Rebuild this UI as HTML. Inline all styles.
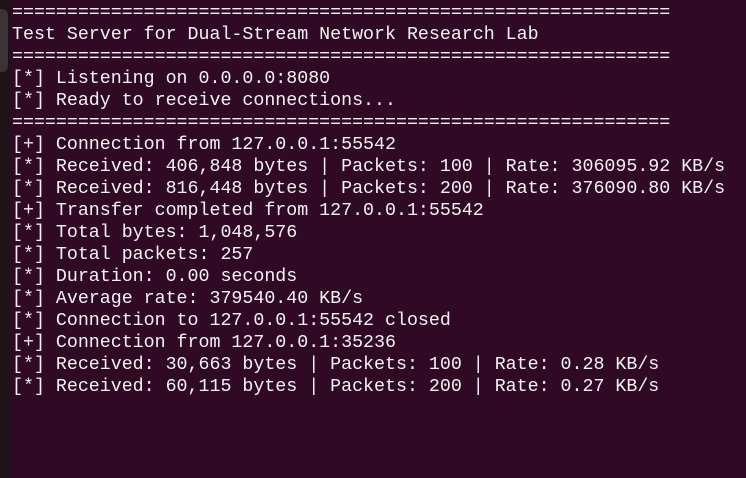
<!DOCTYPE html>
<html><head><style>
html,body{margin:0;padding:0;width:746px;height:478px;overflow:hidden;background:#300a24;}
.strip{position:absolute;left:0;top:0;width:11px;height:478px;background:#201219;}
.knob{position:absolute;left:0;top:9px;width:8px;height:63px;background:#3b3337;border-radius:0 6px 6px 0;}
pre{position:absolute;left:12px;top:2px;margin:0;font-family:"Liberation Mono",monospace;font-size:18.3px;line-height:22px;color:#f2f2f2;}
</style></head><body>
<div class="strip"></div><div class="knob"></div>
<pre>============================================================
Test Server for Dual-Stream Network Research Lab
============================================================
[*] Listening on 0.0.0.0:8080
[*] Ready to receive connections...
============================================================
[+] Connection from 127.0.0.1:55542
[*] Received: 406,848 bytes | Packets: 100 | Rate: 306095.92 KB/s
[*] Received: 816,448 bytes | Packets: 200 | Rate: 376090.80 KB/s
[+] Transfer completed from 127.0.0.1:55542
[*] Total bytes: 1,048,576
[*] Total packets: 257
[*] Duration: 0.00 seconds
[*] Average rate: 379540.40 KB/s
[*] Connection to 127.0.0.1:55542 closed
[+] Connection from 127.0.0.1:35236
[*] Received: 30,663 bytes | Packets: 100 | Rate: 0.28 KB/s
[*] Received: 60,115 bytes | Packets: 200 | Rate: 0.27 KB/s</pre>
</body></html>
